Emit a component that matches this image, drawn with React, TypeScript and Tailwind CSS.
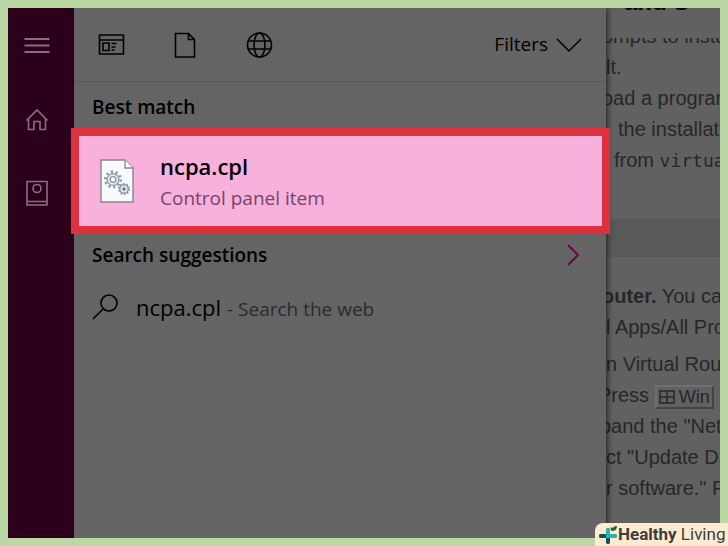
import type { ReactNode } from "react";

function Line({ children, className = "" }: { children: ReactNode; className?: string }) {
  return <p className={`h-[31px] whitespace-nowrap text-xl leading-[31px] ${className}`}>{children}</p>;
}

function Sidebar() {
  return (
    <nav aria-label="Main" className="flex w-[66px] shrink-0 flex-col items-center bg-[#2c001b] pr-2 pt-[23px] text-[#857080]">
      <button aria-label="Menu" className="h-7 w-7">
        <svg viewBox="0 0 28 28" className="h-7 w-7" fill="none" stroke="currentColor" strokeWidth="2">
          <path d="M1.500 8h25M1.500 14.500h25M1.500 21h25" />
        </svg>
      </button>
      <button aria-label="Home" className="mt-[46px] h-7 w-7">
        <svg viewBox="0 0 28 28" className="h-7 w-7" fill="none" stroke="currentColor" strokeWidth="1.6">
          <path d="M3.5 15.5 14 5l10.500 10.500M5.500 14v10.500h5.500v-8h6v8h5.500V14" />
        </svg>
      </button>
      <button aria-label="Notebook" className="mt-[46px] h-7 w-7">
        <svg viewBox="0 0 28 28" className="h-7 w-7" fill="none" stroke="currentColor" strokeWidth="1.6">
          <path d="M4 2.500h20v23.500H4zM4 22.500h20" />
          <circle cx="14" cy="9.500" r="4" />
        </svg>
      </button>
    </nav>
  );
}

function FileGears() {
  return (
    <svg viewBox="0 0 34 44" className="h-11 w-[34px] shrink-0" fill="none">
      <path d="M1 1h24l8 8v34H1z" fill="#f8fafb" stroke="#85858c" strokeWidth="1.4" />
      <path d="M25 1v8h8" fill="#fff" stroke="#85858c" strokeWidth="1.3" />
      <g stroke="#8b9ba6">
        <circle cx="13" cy="20.500" r="7.700" strokeWidth="2.600" strokeDasharray="2.200 2.638" />
        <circle cx="13" cy="20.500" r="5.900" fill="#e3eaee" strokeWidth="1.200" />
        <circle cx="13" cy="20.500" r="2.800" fill="#fff" strokeWidth="1.300" />
        <circle cx="24" cy="30" r="5.200" strokeWidth="1.800" strokeDasharray="1.700 1.567" />
        <circle cx="24" cy="30" r="4.200" fill="#e3eaee" strokeWidth="1.400" />
        <circle cx="24" cy="30" r="1.200" fill="#596b77" stroke="#657783" />
      </g>
    </svg>
  );
}

function SearchPanel() {
  return (
    <main className="relative z-10 min-w-0 flex-1 bg-[#646464] font-['Open_Sans',sans-serif] text-[19px] text-black shadow-[2px_0_5px_rgba(0,0,0,0.55)]">
      <div className="flex h-[74px] items-center border-b border-[#575757] pl-[23px] pr-6">
        <button aria-label="Apps" className="h-7 w-7">
          <svg viewBox="0 0 28 28" className="h-7 w-7" fill="none" stroke="currentColor" strokeWidth="1.6">
            <path d="M2.500 4h24v19h-24zM2.500 9h24M6 12h6v7.500H6zM14.500 12.500h5M14.500 16h4M14.500 19h3" />
          </svg>
        </button>
        <button aria-label="Documents" className="ml-[46px] h-7 w-7">
          <svg viewBox="0 0 28 28" className="h-7 w-7" fill="none" stroke="currentColor" strokeWidth="1.6">
            <path d="M4.500 2.500h13l6 6v17.500h-19zM17.500 2.500v6h6" />
          </svg>
        </button>
        <button aria-label="Web" className="ml-[46px] h-7 w-7">
          <svg viewBox="0 0 28 28" className="h-7 w-7" fill="none" stroke="currentColor" strokeWidth="1.6">
            <circle cx="14.500" cy="14" r="12" />
            <ellipse cx="14.500" cy="14" rx="5.500" ry="12" />
            <path d="M3.500 10h22M3.500 18h22" />
          </svg>
        </button>
        <button className="ml-auto flex items-center gap-2">
          Filters
          <svg viewBox="0 0 26 16" className="h-4 w-[26px]" fill="none" stroke="currentColor" strokeWidth="1.5">
            <path d="m1 2 12 12L25 2" />
          </svg>
        </button>
      </div>
      <h2 className="flex h-[46px] items-center pl-[18px] pt-1 font-semibold">Best match</h2>
      <button className="relative -ml-[3px] -mr-1 flex h-[106px] w-[calc(100%+7px)] items-center gap-[26px] border-8 border-[#df303e] bg-[#f8b0dc] pl-[21px] text-left">
        <FileGears />
        <span className="flex flex-col pt-0.5">
          <span className="text-[22px] leading-8 font-semibold">ncpa.cpl</span>
          <span className="leading-8 text-[#714865]">Control panel item</span>
        </span>
      </button>
      <button className="flex h-[42px] w-full items-center justify-between pl-[18px] pr-[26px] font-semibold">
        Search suggestions
        <svg viewBox="0 0 14 22" className="h-[22px] w-[14px]" fill="none" stroke="#650345" strokeWidth="1.8">
          <path d="m2 1 10 10L2 21" />
        </svg>
      </button>
      <button className="flex h-[62px] w-full items-center pl-[18px]">
        <svg viewBox="0 0 26 26" className="mr-[18px] h-[26px] w-[26px]" fill="none" stroke="currentColor" strokeWidth="1.6">
          <circle cx="17" cy="9" r="8" />
          <path d="M11 15 1 25" />
        </svg>
        <span className="flex items-baseline gap-1.5">
          <span className="text-[22px]">ncpa.cpl</span>
          <span className="text-[#2b2b2b]">- Search the web</span>
        </span>
      </button>
    </main>
  );
}

function Article() {
  return (
    <article className="w-[114px] shrink-0 overflow-hidden bg-[#616161] font-['Liberation_Sans',sans-serif] text-[#272727]">
      <h2 className="-mt-[22px] h-[52px] pl-[18px] text-2xl leading-8 font-bold text-black">and S</h2>
      <div className="flex h-3.5 items-end overflow-hidden">
        <Line className="-ml-1">ompts to insta</Line>
      </div>
      <Line>lt.</Line>
      <Line className="-ml-1">oad a progran</Line>
      <Line className="pl-3">the installati</Line>
      <Line className="pl-2">from <code className="font-['DejaVu_Sans_Mono',monospace] text-lg">virtua</code></Line>
      <div className="mb-6 mt-[43px] h-[38px] bg-[#595959]" />
      <Line className="-ml-1"><b>outer.</b> You ca</Line>
      <Line>l Apps/All Pro</Line>
      <Line className="mt-1.5">n Virtual Rou</Line>
      <Line className="-ml-2">Press <kbd className="inline-flex h-6 items-center gap-1 border-2 border-t-[#707070] border-l-[#707070] border-r-[#444] border-b-[#444] px-0.5 align-middle font-['Liberation_Sans',sans-serif] text-lg leading-5">
        <svg viewBox="0 0 16 16" className="h-4 w-4" fill="none" stroke="currentColor" strokeWidth="1.5"><path d="M1 2h14v12H1zM8 2v12M1 8h14" /></svg>
        Win</kbd></Line>
      <Line className="-ml-1.5">pand the "Net</Line>
      <Line>ct "Update Dr</Line>
      <Line>r software." F</Line>
    </article>
  );
}

export default function App() {
  return (
    <div className="relative flex min-h-screen bg-[#bad7a4] p-2">
      <div className="flex min-w-0 flex-1 overflow-hidden">
        <Sidebar />
        <SearchPanel />
        <Article />
      </div>
      <div className="absolute bottom-0 right-0 z-20 flex h-[23px] w-[133px] items-center rounded-tl-lg bg-[#fcebd1] pl-[3px] font-['Roboto',sans-serif] text-[17px] leading-none text-[#3d3d3d]">
        <svg viewBox="0 0 20 22" className="h-[22px] w-5 shrink-0">
          <path d="M10 6v12M3 12h14" stroke="#208f9d" strokeWidth="4" strokeLinecap="round" />
          <path d="M10 13v5M3 12h4" stroke="#174e60" strokeWidth="4" strokeLinecap="round" />
          <path d="M10 6v6h7" stroke="#2ab2b7" strokeWidth="4" fill="none" strokeLinecap="round" />
          <path d="M14 7q0-5 5-5 0 5-5 5M14 7q-2-1-1-4 3 1 1 4" fill="#286331" />
        </svg>
        <span className="whitespace-nowrap"><b>Healthy</b> Living</span>
      </div>
    </div>
  );
}
